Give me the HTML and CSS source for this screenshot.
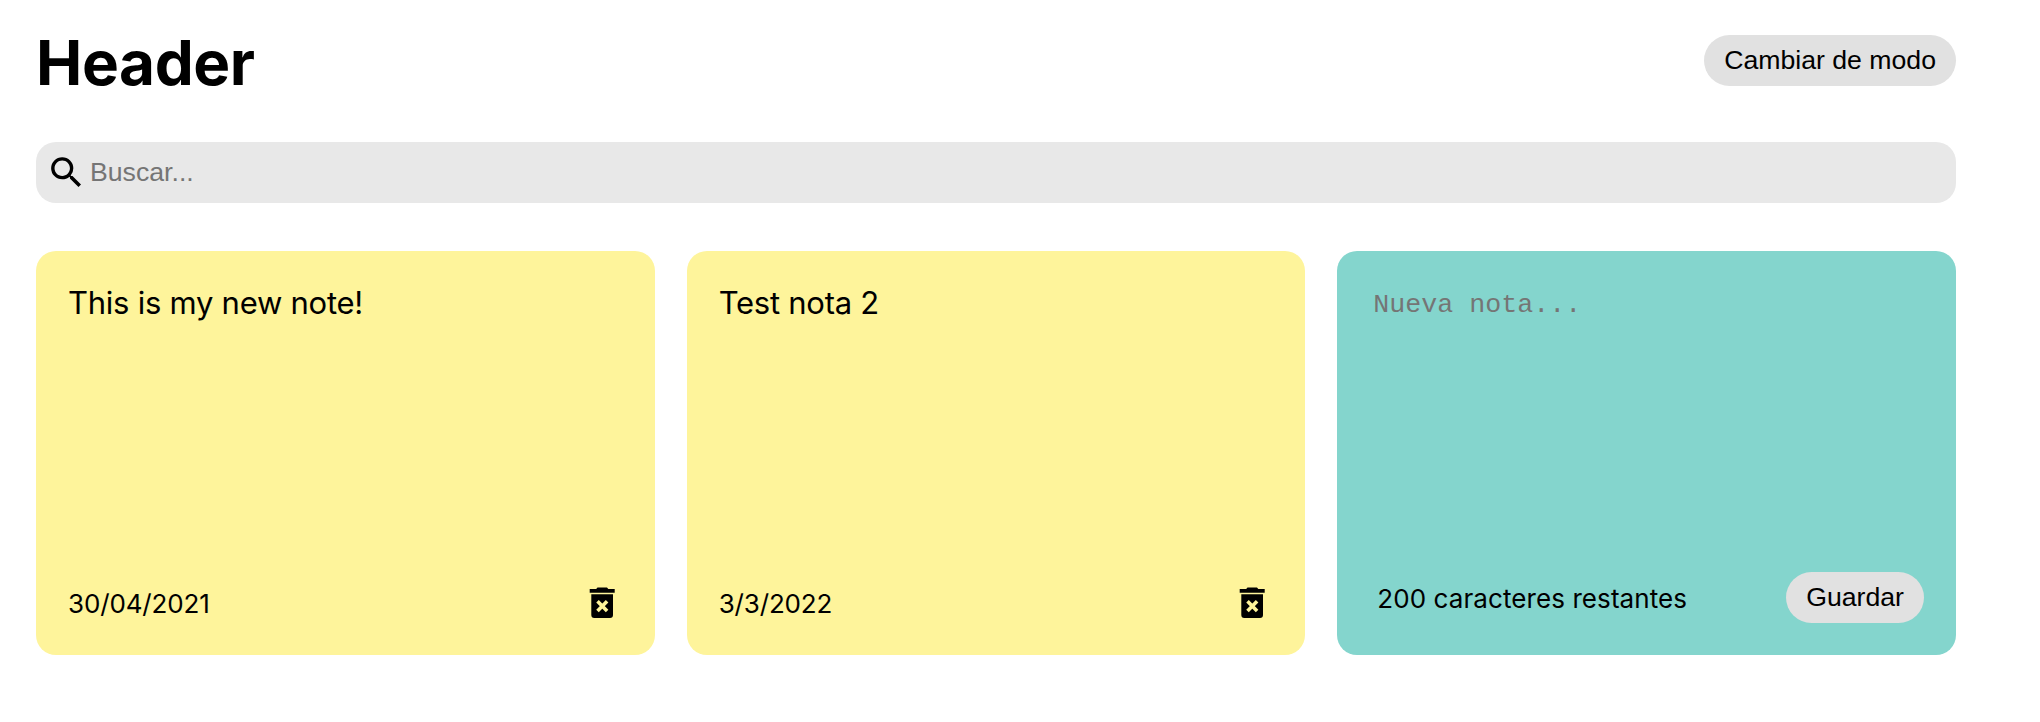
FILE: index.html
```html
<!DOCTYPE html>
<html lang="es">
<head><meta charset="utf-8"><title>Notas</title><link rel="stylesheet" href="styles.css"></head>
<body>
<div class="container">
<header class="header"><h1>Header</h1><button class="save toggle">Cambiar de modo</button></header>
<div class="search"><svg class="search-icon" viewBox="0 0 24 24"><path d="M15.5 14h-.79l-.28-.27A6.47 6.47 0 0 0 16 9.5 6.5 6.5 0 1 0 9.5 16c1.61 0 3.09-.59 4.23-1.57l.27.28v.79l5 4.99L20.49 19l-4.99-5zm-6 0C7.01 14 5 11.99 5 9.5S7.01 5 9.5 5 14 7.01 14 9.5 11.99 14 9.5 14z"/></svg><input type="text" placeholder="Buscar..."></div>
<main class="notes">
<article class="note"><span class="text">This is my new note!</span><div class="footer"><small class="date">30/04/2021</small><svg class="delete" viewBox="0 0 42 42"><path d="M8.700 8h6.500l1.300-1.500h9.500l1.300 1.500H33.700v3.700H8.700zM10.300 13.200H32V34a3 3 0 0 1-3 3H13.300a3 3 0 0 1-3-3z"/><path class="cross" d="M16.500 20.300l9.600 9.600M26.100 20.300L16.500 29.900"/></svg></div></article>
<article class="note"><span class="text">Test nota 2</span><div class="footer"><small class="date">3/3/2022</small><svg class="delete" viewBox="0 0 42 42"><path d="M8.700 8h6.500l1.300-1.500h9.500l1.300 1.500H33.700v3.700H8.700zM10.300 13.200H32V34a3 3 0 0 1-3 3H13.300a3 3 0 0 1-3-3z"/><path class="cross" d="M16.500 20.300l9.600 9.600M26.100 20.300L16.500 29.900"/></svg></div></article>
<article class="note new"><textarea placeholder="Nueva nota..."></textarea><div class="footer"><small class="remaining">200 caracteres restantes</small><button class="save">Guardar</button></div></article>
</main>
</div>
</body>
</html>
```
FILE: styles.css
```css
* { box-sizing: border-box; }
body { margin: 0; background: #fff; color: #000; font-family: Inter, sans-serif; }
.container { width: 1920px; margin-left: 36px; }
.header { display: flex; justify-content: space-between; align-items: center; height: 142px; padding-bottom: 16px; }
h1 { margin: 0; font-size: 62px; line-height: 78px; font-weight: 700; letter-spacing: -0.4px; }
.save { height: 51px; padding: 0 20px; border: 0; border-radius: 26px; background: #e1e1e1; color: #000; font: 26.67px "Liberation Sans", Arial, sans-serif; }
.toggle { margin-bottom: 5px; }
.search { display: flex; align-items: center; height: 61px; padding: 0 10px; border-radius: 20px; background: #e8e8e8; }
.search-icon { width: 41px; height: 41px; flex: none; }
input { flex: 1; border: 0; outline: 0; padding: 2px 3px; background: transparent; font: 26.67px "Liberation Sans", Arial, sans-serif; }
input::placeholder, textarea::placeholder { color: #757575; }
.notes { display: grid; grid-template-columns: repeat(3, 1fr); gap: 32px; margin-top: 48px; }
.note { display: flex; flex-direction: column; justify-content: space-between; height: 404px; padding: 32px; border-radius: 20px; background: #fef49b; }
.text { font-size: 31px; line-height: 40px; letter-spacing: -0.25px; }
.footer { display: flex; align-items: center; justify-content: space-between; }
small { font-size: 26px; line-height: 32px; }
.date { padding-top: 4px; letter-spacing: -0.15px; }
.delete { width: 42px; height: 42px; }
.cross { fill: none; stroke: #fef49b; stroke-width: 3.6; }
.new { background: #84d5cd; }
textarea { height: 200px; border: 0; padding: 7px 4px; resize: none; outline: 0; background: transparent; font: 26.67px "Liberation Mono", monospace; }
.remaining { padding: 2px 0 0 8px; letter-spacing: 0.08px; }
```
